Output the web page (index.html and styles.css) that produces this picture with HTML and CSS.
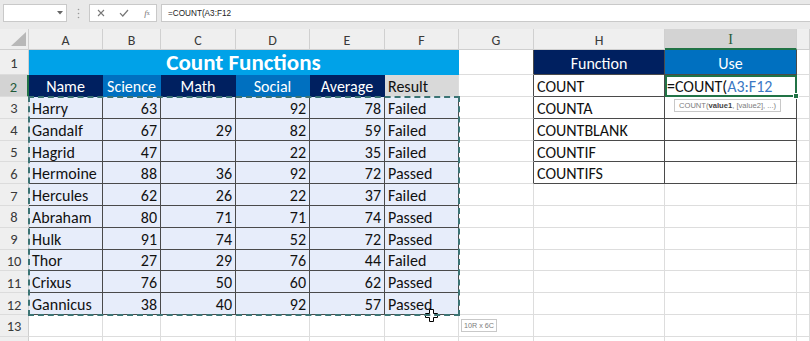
FILE: index.html
```html
<!DOCTYPE html>
<html>
<head>
<meta charset="utf-8">
<title>Count Functions</title>
<link rel="stylesheet" href="styles.css">
</head>
<body>
<div class="toolbar">
    <div class="namebox">
        <svg width="6" height="4" viewBox="0 0 6 4"><path d="M0 0h6L3 3.5z" fill="#666"/></svg>
    </div>
    <div class="dots">
        <svg width="3" height="11" viewBox="0 0 3 11"><circle cx="1.5" cy="1.5" r="0.8" fill="#999"/><circle cx="1.5" cy="5.5" r="0.8" fill="#999"/><circle cx="1.5" cy="9.5" r="0.8" fill="#999"/></svg>
    </div>
    <div class="btns">
        <span class="btn"><svg width="8" height="8" viewBox="0 0 8 8"><path d="M1 1l6 6M7 1L1 7" stroke="#777" stroke-width="1.1"/></svg></span>
        <span class="btn"><svg width="10" height="8" viewBox="0 0 10 8"><path d="M1 4.2l2.8 2.8L9 1" stroke="#777" stroke-width="1.2" fill="none"/></svg></span>
        <span class="btn fx"><i>f</i><sub>x</sub></span>
    </div>
    <div class="formula">=COUNT(A3:F12</div>
</div>

<div class="sheet">
    <!-- column headers -->
    <div class="ch corner"><svg width="17" height="16" viewBox="0 0 17 16"><path d="M16 1v14H1z" fill="#b8b8b8"/></svg></div>
    <div class="ch">A</div>
    <div class="ch">B</div>
    <div class="ch">C</div>
    <div class="ch">D</div>
    <div class="ch">E</div>
    <div class="ch">F</div>
    <div class="ch">G</div>
    <div class="ch">H</div>
    <div class="ch sel">I</div>
    <div class="ch"></div>

    <!-- row 1 -->
    <div class="rh">1</div>
    <div class="cell title">Count Functions</div>
    <div class="cell edge"></div>
    <div class="cell ft navy">Function</div>
    <div class="cell ft blue">Use</div>
    <div class="cell"></div>

    <!-- row 2 -->
    <div class="rh sel">2</div>
    <div class="cell navy">Name</div>
    <div class="cell blue">Science</div>
    <div class="cell navy">Math</div>
    <div class="cell blue">Social</div>
    <div class="cell navy">Average</div>
    <div class="cell grey">Result</div>
    <div class="cell edge"></div>
    <div class="cell ft">COUNT</div>
    <div class="cell ft edit">=COUNT(<span class="ref">A3:F12</span>
        <div class="tip">COUNT(<b>value1</b>, [value2], ...)</div>
    </div>
    <div class="cell"></div>

    <!-- row 3 -->
    <div class="rh">3</div>
    <div class="cell tb">Harry</div>
    <div class="cell tb num">63</div>
    <div class="cell tb num"></div>
    <div class="cell tb num">92</div>
    <div class="cell tb num">78</div>
    <div class="cell tb">Failed</div>
    <div class="cell edge"></div>
    <div class="cell ft">COUNTA</div>
    <div class="cell ft"></div>
    <div class="cell"></div>

    <!-- row 4 -->
    <div class="rh">4</div>
    <div class="cell tb">Gandalf</div>
    <div class="cell tb num">67</div>
    <div class="cell tb num">29</div>
    <div class="cell tb num">82</div>
    <div class="cell tb num">59</div>
    <div class="cell tb">Failed</div>
    <div class="cell edge"></div>
    <div class="cell ft">COUNTBLANK</div>
    <div class="cell ft"></div>
    <div class="cell"></div>

    <!-- row 5 -->
    <div class="rh">5</div>
    <div class="cell tb">Hagrid</div>
    <div class="cell tb num">47</div>
    <div class="cell tb num"></div>
    <div class="cell tb num">22</div>
    <div class="cell tb num">35</div>
    <div class="cell tb">Failed</div>
    <div class="cell edge"></div>
    <div class="cell ft">COUNTIF</div>
    <div class="cell ft"></div>
    <div class="cell"></div>

    <!-- row 6 -->
    <div class="rh">6</div>
    <div class="cell tb">Hermoine</div>
    <div class="cell tb num">88</div>
    <div class="cell tb num">36</div>
    <div class="cell tb num">92</div>
    <div class="cell tb num">72</div>
    <div class="cell tb">Passed</div>
    <div class="cell edge"></div>
    <div class="cell ft">COUNTIFS</div>
    <div class="cell ft"></div>
    <div class="cell"></div>

    <!-- row 7 -->
    <div class="rh">7</div>
    <div class="cell tb">Hercules</div>
    <div class="cell tb num">62</div>
    <div class="cell tb num">26</div>
    <div class="cell tb num">22</div>
    <div class="cell tb num">37</div>
    <div class="cell tb">Failed</div>
    <div class="cell"></div>
    <div class="cell"></div>
    <div class="cell"></div>
    <div class="cell"></div>

    <!-- row 8 -->
    <div class="rh">8</div>
    <div class="cell tb">Abraham</div>
    <div class="cell tb num">80</div>
    <div class="cell tb num">71</div>
    <div class="cell tb num">71</div>
    <div class="cell tb num">74</div>
    <div class="cell tb">Passed</div>
    <div class="cell"></div>
    <div class="cell"></div>
    <div class="cell"></div>
    <div class="cell"></div>

    <!-- row 9 -->
    <div class="rh">9</div>
    <div class="cell tb">Hulk</div>
    <div class="cell tb num">91</div>
    <div class="cell tb num">74</div>
    <div class="cell tb num">52</div>
    <div class="cell tb num">72</div>
    <div class="cell tb">Passed</div>
    <div class="cell"></div>
    <div class="cell"></div>
    <div class="cell"></div>
    <div class="cell"></div>

    <!-- row 10 -->
    <div class="rh">10</div>
    <div class="cell tb">Thor</div>
    <div class="cell tb num">27</div>
    <div class="cell tb num">29</div>
    <div class="cell tb num">76</div>
    <div class="cell tb num">44</div>
    <div class="cell tb">Failed</div>
    <div class="cell"></div>
    <div class="cell"></div>
    <div class="cell"></div>
    <div class="cell"></div>

    <!-- row 11 -->
    <div class="rh">11</div>
    <div class="cell tb">Crixus</div>
    <div class="cell tb num">76</div>
    <div class="cell tb num">50</div>
    <div class="cell tb num">60</div>
    <div class="cell tb num">62</div>
    <div class="cell tb">Passed</div>
    <div class="cell"></div>
    <div class="cell"></div>
    <div class="cell"></div>
    <div class="cell"></div>

    <!-- row 12 -->
    <div class="rh">12</div>
    <div class="cell tb">Gannicus</div>
    <div class="cell tb num">38</div>
    <div class="cell tb num">40</div>
    <div class="cell tb num">92</div>
    <div class="cell tb num">57</div>
    <div class="cell tb hold">Passed
        <svg class="pointer" width="13" height="13" viewBox="0 0 13 13"><path d="M4.5 0.5h4v4h4v4h-4v4h-4v-4h-4v-4h4z" fill="#fff" stroke="#000"/></svg>
    </div>
    <div class="cell"></div>
    <div class="cell"></div>
    <div class="cell"></div>
    <div class="cell"></div>

    <!-- row 13 -->
    <div class="rh">13</div>
    <div class="cell"></div>
    <div class="cell"></div>
    <div class="cell"></div>
    <div class="cell"></div>
    <div class="cell"></div>
    <div class="cell"></div>
    <div class="cell hold"><div class="size">10R x 6C</div></div>
    <div class="cell"></div>
    <div class="cell"></div>
    <div class="cell"></div>

    <!-- row 14, only its top edge shows -->
    <div class="rh"></div>
    <div class="cell"></div>
    <div class="cell"></div>
    <div class="cell"></div>
    <div class="cell"></div>
    <div class="cell"></div>
    <div class="cell"></div>
    <div class="cell"></div>
    <div class="cell"></div>
    <div class="cell"></div>
    <div class="cell"></div>

    <div class="marquee"></div>
</div>
</body>
</html>
```

FILE: styles.css
```css
body {
    margin: 0;
    width: 810px;
    height: 341px;
    overflow: hidden;
    background: #ffffff;
    font-family: Carlito, Lato, sans-serif;
}

/* formula bar */
.toolbar {
    display: flex;
    height: 18px;
    padding: 4px 0 7px 3px;
    background: #e9e9e9;
}
.namebox {
    width: 64px;
    box-sizing: border-box;
    background: #ffffff;
    border: 1px solid #c9c9c9;
    display: flex;
    align-items: center;
    justify-content: flex-end;
    padding-right: 3px;
}
.dots {
    width: 22px;
    display: flex;
    align-items: center;
    justify-content: center;
}
.btns {
    width: 68px;
    box-sizing: border-box;
    background: #ffffff;
    border: 1px solid #c9c9c9;
    display: flex;
    align-items: center;
    padding-left: 5px;
    gap: 11px;
}
.btn {
    width: 12px;
    display: flex;
    justify-content: center;
    align-items: center;
}
.fx {
    font-family: "Liberation Serif", serif;
    font-size: 9px;
    color: #777;
}
.fx sub {
    font-size: 6px;
}
.formula {
    flex: 1;
    margin-left: 4px;
    background: #ffffff;
    border: 1px solid #c9c9c9;
    border-right: none;
    font-family: "Liberation Sans", sans-serif;
    font-size: 8.2px;
    color: #222;
    display: flex;
    align-items: center;
    padding-left: 6px;
}

/* grid */
.sheet {
    position: relative;
    display: grid;
    grid-template-columns: 29px 74px 58px 75px 74px 75px 74px 75px 131px 132px 1fr;
    grid-template-rows: 21px 25px 22px repeat(12, 21.8px);
    font-size: 16px;
    color: #111;
}
.ch, .rh, .cell {
    box-sizing: border-box;
    display: flex;
    align-items: center;
    white-space: nowrap;
}
.ch {
    background: #efefef;
    border-right: 1px solid #d0d0d0;
    border-bottom: 1px solid #cfcfcf;
    justify-content: center;
    padding-top: 2px;
    font-size: 14px;
    color: #3a3a3a;
}
.corner {
    align-items: flex-end;
    justify-content: flex-end;
    padding: 0 1px 2px 0;
}
.rh {
    background: #efefef;
    border-right: 1px solid #cfcfcf;
    border-bottom: 1px solid #dcdcdc;
    justify-content: center;
    padding-top: 2px;
    font-size: 14.5px;
    color: #3a3a3a;
}
.sel {
    background: #d3d3d3;
    color: #1f5a3a;
}
.ch.sel {
    border-bottom: 2px solid #217346;
    font-family: "Liberation Serif", serif;
}
.rh.sel {
    border-right: 2px solid #217346;
}
.cell {
    border-right: 1px solid #dddddd;
    border-bottom: 1px solid #dddddd;
    padding: 2px 3px 0;
}
.num {
    justify-content: flex-end;
}
.title {
    grid-column: span 6;
    background: #00a2e8;
    border-color: transparent;
    justify-content: center;
    padding-top: 0;
    color: #ffffff;
    font-weight: 700;
    font-size: 23px;
}
.navy, .blue {
    justify-content: center;
    color: #ffffff;
    border-color: transparent;
}
.navy {
    background: #002060;
}
.blue {
    background: #0070c0;
}
.grey {
    background: #d9d9d9;
}
.tb {
    background: #e7edfa;
    border-right-color: #4a4a4a;
    border-bottom-color: #4a4a4a;
}
.ft {
    border-right-color: #4a4a4a;
    border-bottom-color: #4a4a4a;
}
.edge {
    border-right-color: #4a4a4a;
}
.edit {
    position: relative;
    padding-left: 2px;
    outline: 2px solid #217346;
    outline-offset: -2px;
}
.edit::after {
    content: "";
    position: absolute;
    right: -3px;
    bottom: -3px;
    width: 4px;
    height: 4px;
    background: #217346;
    border: 1px solid #ffffff;
}
.ref {
    color: #3b78c4;
}

/* overlays */
.tip, .size {
    position: absolute;
    background: #ffffff;
    border: 1px solid #c8c8c8;
    font-family: "Liberation Sans", sans-serif;
    font-size: 7.6px;
    color: #7c7c7c;
    padding: 1px 4px;
    line-height: 9px;
}
.tip {
    top: 24px;
    left: 9px;
}
.tip b {
    color: #444;
}
.hold {
    position: relative;
}
.size {
    top: 4px;
    left: 2px;
    padding: 1px 2px;
    font-size: 7.2px;
}
.pointer {
    position: absolute;
    left: 40px;
    top: 16px;
}
.marquee {
    position: absolute;
    grid-column: 2 / 8;
    grid-row: 4 / 14;
    top: -1px;
    left: -1px;
    right: -1px;
    bottom: -1px;
    border: 2px dashed #3c7474;
    pointer-events: none;
}
```
